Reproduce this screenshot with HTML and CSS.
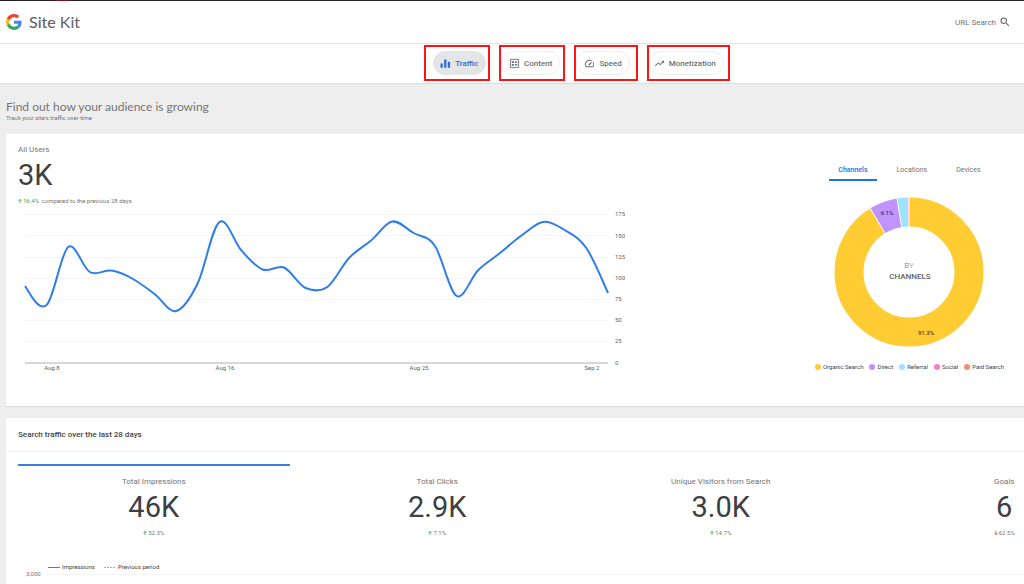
FILE: index.html
```
<!DOCTYPE html>
<html lang="en">
<head>
<meta charset="utf-8">
<title>Site Kit</title>
<link rel="stylesheet" href="styles.css">
</head>
<body>
<header class="header">
  <div class="brand">
    <svg class="brand-logo" viewBox="0 0 48 48" aria-hidden="true">
      <path fill="#ea4335" d="M24 9.5c3.54 0 6.71 1.22 9.21 3.6l6.85-6.85C35.9 2.38 30.47 0 24 0 14.62 0 6.51 5.38 2.56 13.22l7.98 6.19C12.43 13.72 17.74 9.5 24 9.5z"/>
      <path fill="#4285f4" d="M46.98 24.55c0-1.57-.15-3.09-.38-4.55H24v9.02h12.94c-.58 2.96-2.26 5.48-4.78 7.18l7.73 6c4.51-4.18 7.09-10.36 7.09-17.65z"/>
      <path fill="#fbbc05" d="M10.53 28.59c-.48-1.45-.76-2.99-.76-4.59s.27-3.14.76-4.59l-7.98-6.19C.92 16.46 0 20.12 0 24c0 3.88.92 7.54 2.56 10.78l7.97-6.19z"/>
      <path fill="#34a853" d="M24 48c6.48 0 11.93-2.13 15.89-5.81l-7.73-6c-2.15 1.45-4.92 2.3-8.16 2.3-6.26 0-11.57-4.22-13.47-9.91l-7.98 6.19C6.51 42.62 14.62 48 24 48z"/>
    </svg>
    <span class="brand-name"><b>Site</b> Kit</span>
  </div>
  <button class="url-search" type="button">URL Search
    <svg class="search-icon" viewBox="2 2 20 20" aria-hidden="true"><path d="M15.5 14h-.79l-.28-.27A6.47 6.47 0 0 0 16 9.500 6.500 6.500 0 1 0 9.500 16c1.610 0 3.090-.59 4.230-1.570l.27.28v.79l5 4.990L20.490 19l-4.990-5zm-6 0a4.500 4.500 0 1 1 0-9 4.500 4.500 0 0 1 0 9z"/></svg>
  </button>
</header>

<nav class="nav">
  <div class="nav-inner">
    <div class="mark mark-traffic"><button class="pill pill-active" type="button">
      <svg class="pill-icon" viewBox="0 0 24 24" aria-hidden="true"><path fill="currentColor" d="M1 12h5v9H1zM9 3h5v18H9zM17 8h5v13h-5z"/></svg>Traffic</button></div>
    <div class="mark mark-content"><button class="pill" type="button">
      <svg class="pill-icon" viewBox="0 0 24 24" fill="none" stroke="currentColor" stroke-width="2" aria-hidden="true"><path d="M3 3h18v18H3z"/><path fill="currentColor" stroke="none" d="M6 7h5v4H6zM6 13h5v4H6zM13 7h5v2h-5zM13 10h5v1h-5zM13 13h5v2h-5zM13 16h5v1h-5z"/></svg>Content</button></div>
    <div class="mark mark-speed"><button class="pill" type="button">
      <svg class="pill-icon" viewBox="0 0 24 24" aria-hidden="true"><path fill="currentColor" d="M20.380 8.570l-1.230 1.850a8 8 0 0 1-.22 7.580H5.070A8 8 0 0 1 15.580 6.850l1.850-1.230A10 10 0 0 0 3.350 19a2 2 0 0 0 1.720 1h13.850a2 2 0 0 0 1.740-1 10 10 0 0 0-.27-10.440zm-9.790 6.840a2 2 0 0 0 2.830 0l5.660-8.490-8.490 5.660a2 2 0 0 0 0 2.830z"/></svg>Speed</button></div>
    <div class="mark mark-money"><button class="pill" type="button">
      <svg class="pill-icon" viewBox="0 0 24 24" aria-hidden="true"><path fill="currentColor" d="M16 6l2.290 2.290-4.880 4.880-4-4L2 16.590 3.410 18l6-6 4 4 6.300-6.290L22 12V6z"/></svg>Monetization</button></div>
  </div>
</nav>

<main class="main">
  <h1 class="title">Find out how your audience is growing</h1>
  <p class="subtitle">Track your site's traffic over time</p>

  <section class="card audience">
    <div class="trend">
      <h2 class="label">All Users</h2>
      <div class="value">3K</div>
      <p class="change"><svg class="arrow up" viewBox="0 0 10 10" aria-hidden="true"><path d="M5 10V1M1 5l4-4 4 4"/></svg><span class="gain">16.4%</span> compared to the previous 28 days</p>
      <svg class="line-chart" viewBox="18 208 612 166" role="img" aria-label="All users by day">
        <path class="grid" d="M25 214.500H608M25 235.500H608M25 257.500H608M25 278.500H608M25 299.500H608M25 320.500H608M25 341.500H608"/>
        <path class="axis" d="M25 363H608"/>
        <path class="series" d="M25 286C31 296 39.400 311.500 46.600 305S61 252.500 68.200 247S82.600 268 89.800 272S104 269.500 111.400 270.500S126 275 133 279S147.400 288.700 154.600 294S169 313 176.200 311S190.600 298 197.800 283S212 227.500 219.400 222S234 242 241 250S255.300 266.500 262.500 269.500S277 264.500 284 267.500S298.500 285 305.700 288S320 292 327.300 287S341.800 265.700 349 258S363 247 370.500 241S385 223 392 221.500S406.400 229 413.600 233S428 235.500 435 246S449.500 292 456.700 296S471 277 478.300 270S492.800 258.800 500 253S514 240.700 521.500 235.500S536 223 543 222S557.500 225.700 564.700 230S579 237.500 586.300 248S603 282 608 293"/>
        <g class="tick">
          <text x="615" y="216">175</text><text x="615" y="238">150</text><text x="615" y="259">125</text><text x="615" y="280">100</text><text x="615" y="301">75</text><text x="615" y="322">50</text><text x="615" y="343">25</text><text x="615" y="365">0</text>
        </g>
        <g class="tick tick-x">
          <text x="52" y="370">Aug 8</text><text x="225" y="370">Aug 16</text><text x="419" y="370">Aug 25</text><text x="592" y="370">Sep 2</text>
        </g>
      </svg>
    </div>
    <div class="breakdown">
      <div class="tabs" role="tablist">
        <button class="tab tab-active" type="button" role="tab" aria-selected="true">Channels</button>
        <button class="tab" type="button" role="tab" aria-selected="false">Locations</button>
        <button class="tab" type="button" role="tab" aria-selected="false">Devices</button>
      </div>
      <svg class="donut" viewBox="0 0 150 150" role="img" aria-label="Users by channel">
        <g fill="none" stroke-width="29" transform="rotate(-90 75 75)">
          <circle cx="75" cy="75" r="60" pathLength="1000" stroke="#ffcc33" stroke-dasharray="913 87"/>
          <circle cx="75" cy="75" r="60" pathLength="1000" stroke="#c093ff" stroke-dasharray="61 939" stroke-dashoffset="-913"/>
          <circle cx="75" cy="75" r="60" pathLength="1000" stroke="#9de2ff" stroke-dasharray="23 977" stroke-dashoffset="-974"/>
          <circle cx="75" cy="75" r="60" pathLength="1000" stroke="#ffb3c8" stroke-dasharray="3 997" stroke-dashoffset="-997"/>
        </g>
        <path class="slice-edge" d="M75 31V0M67.700 31L63 1M51.300 37L36 11"/>
        <text class="slice-label" x="53" y="18">6.1%</text>
        <text class="slice-label" x="92" y="138">91.3%</text>
        <text class="donut-by" x="75" y="71">BY</text>
        <text class="donut-name" x="76" y="82">CHANNELS</text>
      </svg>
      <ul class="legend">
        <li class="organic">Organic Search</li>
        <li class="direct">Direct</li>
        <li class="referral">Referral</li>
        <li class="social">Social</li>
        <li class="paid">Paid Search</li>
      </ul>
    </div>
  </section>

  <section class="card search">
    <h2 class="card-title">Search traffic over the last 28 days</h2>
    <div class="metrics">
      <div class="metric metric-active"><h3 class="label">Total Impressions</h3><div class="value">46K</div><p class="change"><svg class="arrow up" viewBox="0 0 10 10" aria-hidden="true"><path d="M5 10V1M1 5l4-4 4 4"/></svg>52.3%</p></div>
      <div class="metric"><h3 class="label">Total Clicks</h3><div class="value">2.9K</div><p class="change"><svg class="arrow up" viewBox="0 0 10 10" aria-hidden="true"><path d="M5 10V1M1 5l4-4 4 4"/></svg>7.1%</p></div>
      <div class="metric"><h3 class="label">Unique Visitors from Search</h3><div class="value">3.0K</div><p class="change"><svg class="arrow up" viewBox="0 0 10 10" aria-hidden="true"><path d="M5 10V1M1 5l4-4 4 4"/></svg>14.7%</p></div>
      <div class="metric"><h3 class="label">Goals</h3><div class="value">6</div><p class="change"><svg class="arrow down" viewBox="0 0 10 10" aria-hidden="true"><path d="M5 0v9M1 5l4 4 4-4"/></svg>62.5%</p></div>
    </div>
    <div class="impressions">
      <div class="series-legend">
        <span class="key">Impressions</span>
        <span class="key key-previous">Previous period</span>
      </div>
      <div class="scale"><span>3,000</span></div>
    </div>
  </section>
</main>
</body>
</html>
```
FILE: styles.css
```
* {
  box-sizing: border-box;
}

html {
  overflow: hidden;
}

body {
  margin: 0;
  height: 100vh;
  overflow: hidden;
  background: #eee;
  color: #757575;
  font-family: Roboto, "Liberation Sans", sans-serif;
  font-size: 6px;
}

h1, h2, h3, p, ul {
  margin: 0;
  padding: 0;
  font-weight: 400;
}

button {
  margin: 0;
  border: 0;
  background: none;
  color: inherit;
  font-family: inherit;
}

svg {
  display: block;
}

.header {
  display: flex;
  align-items: center;
  justify-content: space-between;
  height: 44px;
  padding: 1px 14px 0 6px;
  border-bottom: 1px solid #e6e6e6;
  background: linear-gradient(90deg, #202124 55px, #7a1418 55px, #7a1418 70px, #202124 70px) top / 100% 1px no-repeat #fff;
}

.brand {
  display: flex;
  align-items: center;
  gap: 7px;
}

.brand-logo {
  width: 16px;
  height: 16px;
}

.brand-name {
  color: #5f6368;
  font-family: Lato, sans-serif;
  font-size: 16px;
  line-height: 20px;
}

.brand-name b {
  font-weight: 500;
}

.url-search {
  display: flex;
  align-items: center;
  gap: 4px;
  padding: 0;
  font-size: 8px;
}

.search-icon {
  width: 10px;
  height: 10px;
  fill: #616161;
}

.nav {
  height: 40px;
  overflow: hidden;
  border-bottom: 1px solid #dcdcdc;
  background: #fff;
}

.nav-inner {
  display: flex;
  justify-content: center;
  gap: 9px;
  width: 1154px;
  padding-top: 1px;
}

.mark {
  padding: 4px 0;
  border: 2px solid #fd1515;
}

.mark-traffic {
  padding-right: 2px;
  padding-left: 7px;
}

.mark-content {
  padding-right: 3px;
}

.mark-speed {
  padding-right: 6px;
}

.mark-money {
  padding-right: 4px;
}

.mark-money .pill {
  padding-left: 4px;
}

.pill {
  display: flex;
  align-items: center;
  gap: 4px;
  height: 24px;
  padding: 0 7px;
  border: 1px solid #eee;
  border-radius: 12px;
  color: #6b6f73;
  font-size: 8px;
  font-weight: 500;
}

.pill-active {
  padding-left: 6px;
  border-color: #e4e5e7;
  background: #e4e5e7;
  color: #2a70d8;
}

.pill-icon {
  width: 11px;
  height: 11px;
}

.main {
  padding: 15px 0 0 6px;
}

.title {
  font-family: Lato, sans-serif;
  font-size: 12px;
  line-height: 16px;
}

.subtitle {
  line-height: 6px;
}

.card {
  background: #fff;
  box-shadow: 0 1px 1px #d8d8d8;
}

.audience {
  display: flex;
  justify-content: space-between;
  margin-top: 13px;
  padding: 10px 20px 32px 12px;
}

.label {
  font-size: 8px;
  line-height: 12px;
}

.value {
  color: #3c4043;
  font-size: 29px;
  line-height: 38px;
}

.change {
  display: flex;
  align-items: center;
  gap: 1px;
  line-height: 10px;
  white-space: pre;
}

.trend .change {
  margin-top: 2px;
}

.arrow {
  width: 4px;
  height: 4px;
  fill: none;
  stroke-width: 2;
}

.up {
  stroke: #34a853;
}

.down {
  stroke: #ea4335;
}

.gain {
  color: #34a853;
}

.line-chart {
  width: 612px;
  height: 166px;
  margin-top: 2px;
}

.grid {
  stroke: #f5f5f5;
}

.axis {
  stroke: #b0b0b0;
}

.series {
  fill: none;
  stroke: #2f7de9;
  stroke-width: 2;
}

.tick {
  fill: #616161;
  font-size: 6px;
}

.tick-x {
  text-anchor: middle;
}

.breakdown {
  display: flex;
  flex-direction: column;
  align-items: center;
  padding-top: 16px;
}

.tabs {
  display: flex;
  gap: 11px;
}

.tab {
  height: 21px;
  padding: 1px 9px 0;
  border-bottom: 2px solid transparent;
  font-size: 7px;
}

.tab-active {
  border-color: #1a73e8;
  color: #1a73e8;
  font-weight: 500;
}

.donut {
  width: 150px;
  height: 150px;
  margin-top: 16px;
}

.donut text {
  text-anchor: middle;
}

.slice-edge {
  stroke: #fff;
}

.slice-label {
  fill: #212121;
  font-size: 6px;
}

.donut-by {
  fill: #757575;
  font-size: 8px;
  font-weight: 300;
}

.donut-name {
  fill: #616161;
  font-size: 8px;
  font-weight: 500;
}

.legend {
  display: flex;
  gap: 6px;
  margin-top: 16px;
  color: #424242;
  line-height: 8px;
  list-style: none;
}

.legend li {
  display: flex;
  align-items: center;
  gap: 2px;
  white-space: nowrap;
}

.legend li::before {
  width: 6px;
  height: 6px;
  border-radius: 50%;
  background: currentColor;
  content: "";
}

.organic::before { color: #ffcc33; }
.direct::before { color: #c093ff; }
.referral::before { color: #9de2ff; }
.social::before { color: #ff7ac6; }
.paid::before { color: #ff8a73; }

.search {
  margin-top: 12px;
}

.card-title {
  padding: 11px 12px 10px;
  border-bottom: 1px solid #f0f0f0;
  color: #424242;
  font-size: 8px;
  font-weight: 500;
  line-height: 12px;
}

.metrics {
  display: grid;
  grid-template-columns: repeat(4, 1fr);
  gap: 12px;
  width: 1122px;
  margin: 12px 0 0 12px;
}

.metric {
  padding-top: 10px;
  border-top: 2px solid transparent;
  text-align: center;
}

.metric-active {
  border-color: #3b7eea;
}

.metric .change {
  justify-content: center;
  margin-top: 2px;
}

.impressions {
  padding: 25px 0 20px 20px;
}

.series-legend {
  display: flex;
  gap: 9px;
  padding-left: 22px;
  color: #424242;
  line-height: 8px;
}

.key {
  display: flex;
  align-items: center;
  gap: 2px;
}

.key::before {
  width: 12px;
  height: 1px;
  background: #3b7eea;
  content: "";
}

.key-previous::before {
  background: repeating-linear-gradient(90deg, #8ab4f8 0 2px, transparent 2px 3px);
}

.scale {
  display: flex;
  align-items: center;
  gap: 6px;
  line-height: 6px;
}

.scale::after {
  flex: 1;
  border-top: 1px solid #f5f5f5;
  content: "";
}
```
